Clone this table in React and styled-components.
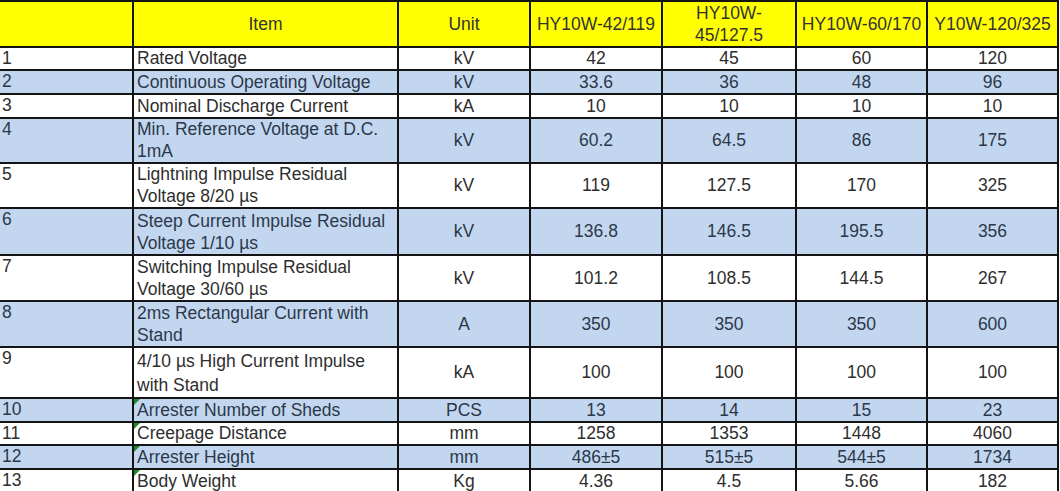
import React from 'react';
import styled, { createGlobalStyle } from 'styled-components';

const GlobalStyle = createGlobalStyle`
  html, body {
    margin: 0;
    padding: 0;
    background: #ffffff;
  }
  body {
    font-family: "Liberation Sans", Arial, sans-serif;
    overflow: hidden;
  }
`;

const Page = styled.div`
  width: 1060px;
  height: 491px;
  overflow: hidden;
  background: #ffffff;
`;

const Sheet = styled.table`
  width: 1058px;
  table-layout: fixed;
  border-collapse: collapse;
  font-size: 17.5px;
  line-height: 21px;
`;

const Column = styled.col`
  width: ${p => p.width}px;
`;

const Row = styled.tr`
  height: ${p => p.height}px;
  background: ${p => (p.tone === 'head' ? '#ffff00' : p.tone === 'blue' ? '#c2d7ef' : '#ffffff')};
  color: ${p => (p.tone === 'blue' ? '#2c384a' : '#2e2e2e')};
`;

const Cell = styled.td`
  border: 2px solid #141414;
  padding: 0 3px;
  overflow: hidden;
  white-space: ${p => (p.nowrap ? 'nowrap' : 'normal')};
  text-align: ${p => (p.align === 'left' ? 'left' : 'center')};
  vertical-align: ${p => (p.valign === 'top' ? 'top' : 'middle')};
  line-height: ${p => (p.lh ? `${p.lh}px` : 'inherit')};
  position: relative;

  &:first-child {
    border-left: none;
    padding-left: 2px;
  }

  ${p => p.flag && `
    &::before {
      content: '';
      position: absolute;
      top: 0;
      left: 0;
      border-top: 6px solid #1f8a2a;
      border-right: 6px solid transparent;
    }
  `}
`;

const HeadCell = styled(Cell).attrs({ as: 'th' })`
  font-weight: normal;
  color: #333333;
  line-height: 22px;
`;

const columns = [133, 265, 132, 132, 134, 131, 131];

const headers = ['', 'Item', 'Unit', 'HY10W-42/119', 'HY10W-45/127.5', 'HY10W-60/170', 'Y10W-120/325'];

const rows = [
  { n: '1', item: 'Rated Voltage', unit: 'kV', v: ['42', '45', '60', '120'], h: 22 },
  { n: '2', item: 'Continuous Operating Voltage', unit: 'kV', v: ['33.6', '36', '48', '96'], h: 24 },
  { n: '3', item: 'Nominal Discharge Current', unit: 'kA', v: ['10', '10', '10', '10'], h: 24 },
  { n: '4', item: 'Min. Reference Voltage at D.C. 1mA', unit: 'kV', v: ['60.2', '64.5', '86', '175'], h: 45, lh: 21.5 },
  { n: '5', item: 'Lightning Impulse Residual Voltage 8/20 µs', unit: 'kV', v: ['119', '127.5', '170', '325'], h: 45, lh: 21.5 },
  { n: '6', item: 'Steep Current Impulse Residual Voltage 1/10 µs', unit: 'kV', v: ['136.8', '146.5', '195.5', '356'], h: 47, lh: 22 },
  { n: '7', item: 'Switching Impulse Residual Voltage 30/60 µs', unit: 'kV', v: ['101.2', '108.5', '144.5', '267'], h: 46, lh: 22 },
  { n: '8', item: '2ms Rectangular Current with Stand', unit: 'A', v: ['350', '350', '350', '600'], h: 46, lh: 22 },
  { n: '9', item: '4/10 µs High Current Impulse with Stand', unit: 'kA', v: ['100', '100', '100', '100'], h: 51, lh: 24 },
  { n: '10', item: 'Arrester Number of Sheds', unit: 'PCS', v: ['13', '14', '15', '23'], h: 24, flag: true },
  { n: '11', item: 'Creepage Distance', unit: 'mm', v: ['1258', '1353', '1448', '4060'], h: 22, flag: true },
  { n: '12', item: 'Arrester Height', unit: 'mm', v: ['486±5', '515±5', '544±5', '1734'], h: 24, flag: true },
  { n: '13', item: 'Body Weight', unit: 'Kg', v: ['4.36', '4.5', '5.66', '182'], h: 24, flag: true },
];

const App = () => (
  <Page>
    <GlobalStyle />
    <Sheet>
      <colgroup>
        {columns.map((w, i) => <Column key={i} width={w} />)}
      </colgroup>
      <thead>
        <Row tone="head" height={46}>
          {headers.map((h, i) => (
            <HeadCell key={i} nowrap={i === 6}>{h}</HeadCell>
          ))}
        </Row>
      </thead>
      <tbody>
        {rows.map((r, i) => (
          <Row key={r.n} height={r.h} tone={i % 2 === 1 ? 'blue' : 'white'}>
            <Cell align="left" valign="top">{r.n}</Cell>
            <Cell align="left" flag={r.flag} lh={r.lh}>{r.item}</Cell>
            <Cell>{r.unit}</Cell>
            {r.v.map((v, j) => <Cell key={j}>{v}</Cell>)}
          </Row>
        ))}
      </tbody>
    </Sheet>
  </Page>
);

export default App;
